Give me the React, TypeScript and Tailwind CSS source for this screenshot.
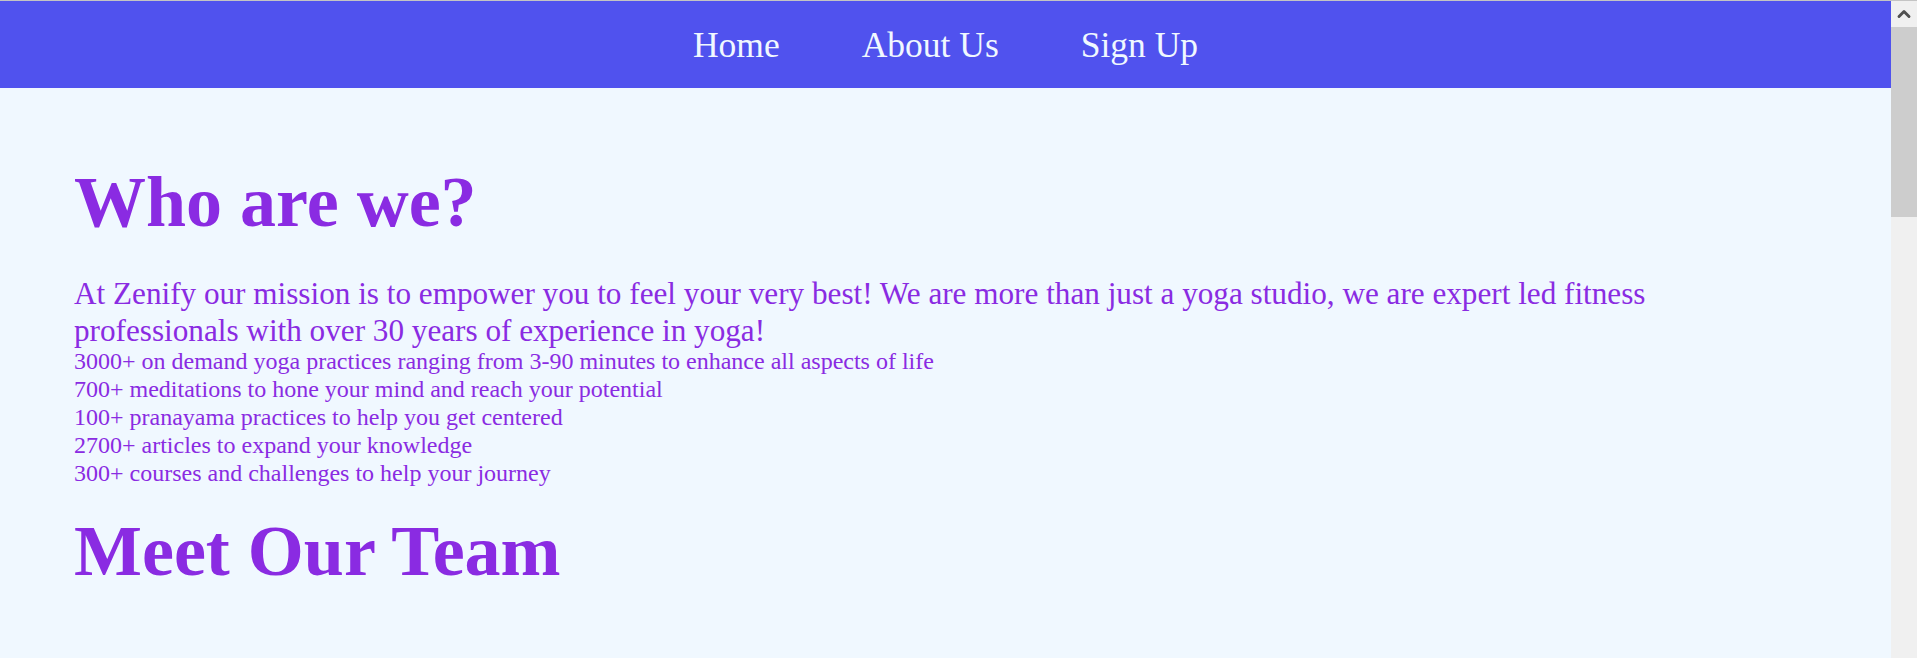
import { ChevronUp } from 'lucide-react';

const links = ['Home', 'About Us', 'Sign Up'];

const stats = [
  '3000+ on demand yoga practices ranging from 3-90 minutes to enhance all aspects of life',
  '700+ meditations to hone your mind and reach your potential',
  '100+ pranayama practices to help you get centered',
  '2700+ articles to expand your knowledge',
  '300+ courses and challenges to help your journey',
];

export default function App() {
  return (
    <div className="flex h-screen overflow-hidden border-t border-[#c4c4c4] bg-[#f0f8ff] font-['Liberation_Serif',_'Times_New_Roman',serif]">
      <main className="flex-1 min-w-0">
        {/* Nav */}
        <nav className="flex h-[87px] items-center justify-center gap-[82px] bg-[#5052ee] pt-[2px]">
          {links.map((l) => (
            <a key={l} href="#" className="text-[35.5px] leading-[41px] text-[#f0f8ff]">
              {l}
            </a>
          ))}
        </nav>

        {/* About */}
        <section className="pl-[74px] pt-[71px] text-[#8a2be2]">
          <h1 className="text-[72px] font-bold leading-[86px]">Who are we?</h1>
          <p className="mt-[30px] max-w-[1626px] text-[31.2px] leading-[37px]">
            At Zenify our mission is to empower you to feel your very best! We are more than just a yoga studio, we are
            expert led fitness professionals with over 30 years of experience in yoga!
          </p>
          <ul className="-mt-[2px] text-[24px] leading-[28px]">
            {stats.map((s) => (
              <li key={s}>{s}</li>
            ))}
          </ul>
          <h1 className="mt-[21px] text-[72px] font-bold leading-[86px]">Meet Our Team</h1>
          <div className="h-[400px]" />
        </section>
      </main>

      {/* Scrollbar */}
      <aside className="flex w-[26px] shrink-0 flex-col bg-[#f0f0f0]">
        <div className="flex h-[26px] items-center justify-center text-[#505050]">
          <ChevronUp size={20} strokeWidth={3.5} />
        </div>
        <div className="h-[190px] bg-[#cdcdcd]" />
      </aside>
    </div>
  );
}
